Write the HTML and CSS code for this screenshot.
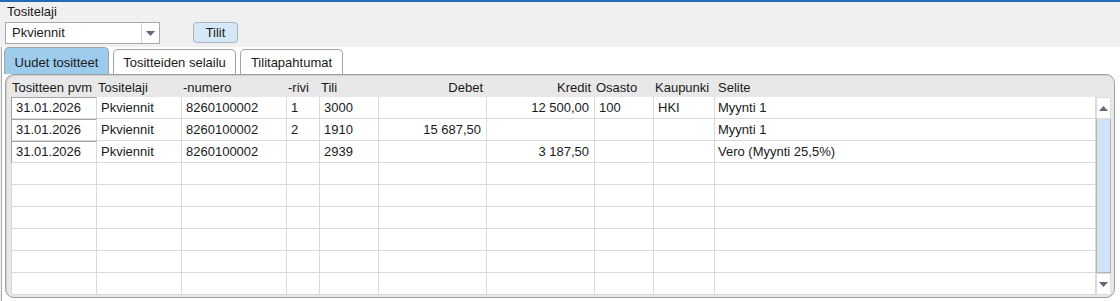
FILE: index.html
```html
<!DOCTYPE html>
<html lang="fi">
<head>
    <meta charset="UTF-8">
    <title>Tositteet</title>
    <link rel="stylesheet" href="styles.css">
</head>
<body>
    <div class="topbar"></div>

    <div class="filters">
        <div class="field-label">Tositelaji</div>
        <div class="filter-row">
            <div class="select">
                <span class="select-value">Pkviennit</span>
                <span class="select-arrow">
                    <svg width="9" height="5" viewBox="0 0 9 5"><path d="M0 0H9L4.5 5Z"/></svg>
                </span>
            </div>
            <button class="btn">Tilit</button>
        </div>
    </div>

    <div class="tab-area">
        <div class="tabs">
            <div class="tab active">Uudet tositteet</div>
            <div class="tab browse">Tositteiden selailu</div>
            <div class="tab events">Tilitapahtumat</div>
        </div>

        <div class="panel">
            <!-- otsikkorivi -->
            <div class="row head">
                <span>Tositteen pvm</span>
                <span>Tositelaji</span>
                <span>-numero</span>
                <span>-rivi</span>
                <span>Tili</span>
                <span class="num">Debet</span>
                <span class="num">Kredit</span>
                <span>Osasto</span>
                <span>Kaupunki</span>
                <span>Selite</span>
            </div>

            <div class="grid-body">
                <div class="rows">
                    <div class="row data">
                        <span class="date">31.01.2026</span>
                        <span>Pkviennit</span>
                        <span>8260100002</span>
                        <span>1</span>
                        <span>3000</span>
                        <span class="num"></span>
                        <span class="num">12 500,00</span>
                        <span>100</span>
                        <span>HKI</span>
                        <span>Myynti 1</span>
                    </div>
                    <div class="row data">
                        <span class="date">31.01.2026</span>
                        <span>Pkviennit</span>
                        <span>8260100002</span>
                        <span>2</span>
                        <span>1910</span>
                        <span class="num">15 687,50</span>
                        <span class="num"></span>
                        <span></span>
                        <span></span>
                        <span>Myynti 1</span>
                    </div>
                    <div class="row data">
                        <span class="date">31.01.2026</span>
                        <span>Pkviennit</span>
                        <span>8260100002</span>
                        <span></span>
                        <span>2939</span>
                        <span class="num"></span>
                        <span class="num">3 187,50</span>
                        <span></span>
                        <span></span>
                        <span>Vero (Myynti 25,5%)</span>
                    </div>
                    <div class="row data empty"><span></span><span></span><span></span><span></span><span></span><span></span><span></span><span></span><span></span><span></span></div>
                    <div class="row data empty"><span></span><span></span><span></span><span></span><span></span><span></span><span></span><span></span><span></span><span></span></div>
                    <div class="row data empty"><span></span><span></span><span></span><span></span><span></span><span></span><span></span><span></span><span></span><span></span></div>
                    <div class="row data empty"><span></span><span></span><span></span><span></span><span></span><span></span><span></span><span></span><span></span><span></span></div>
                    <div class="row data empty"><span></span><span></span><span></span><span></span><span></span><span></span><span></span><span></span><span></span><span></span></div>
                    <div class="row data empty"><span></span><span></span><span></span><span></span><span></span><span></span><span></span><span></span><span></span><span></span></div>
                </div>

                <div class="scrollbar">
                    <span class="sb-btn">
                        <svg width="9" height="5" viewBox="0 0 9 5"><path d="M0 5H9L4.5 0Z"/></svg>
                    </span>
                    <span class="sb-track"></span>
                    <span class="sb-btn">
                        <svg width="9" height="5" viewBox="0 0 9 5"><path d="M0 0H9L4.5 5Z"/></svg>
                    </span>
                </div>
            </div>
        </div>
    </div>
</body>
</html>
```

FILE: styles.css
```css
* { box-sizing: border-box; }

body {
    margin: 0;
    background: #f0f0f0;
    font-family: "Liberation Sans", Arial, sans-serif;
    font-size: 13px;
    color: #1a1a1a;
    overflow: hidden;
}

.topbar {
    height: 2px;
    background: #1f6cb2;
}

/* Suodattimet */
.filters {
    padding: 2px 5px 3px;
}

.field-label {
    line-height: 16px;
    padding-left: 2px;
}

.filter-row {
    display: flex;
    align-items: flex-start;
    margin-top: 2px;
}

.select {
    display: flex;
    width: 155px;
    height: 22px;
    background: #fff;
    border: 1px solid #a9a9a9;
}

.select-value {
    flex: 1;
    padding-left: 6px;
    line-height: 20px;
}

.select-arrow {
    width: 18px;
    display: flex;
    align-items: center;
    justify-content: center;
    border-left: 1px solid #d4d4d4;
}

.select-arrow svg, .sb-btn svg { fill: #5d6a7e; }

.btn {
    margin-left: 33px;
    width: 45px;
    height: 21px;
    padding: 0;
    font: inherit;
    color: inherit;
    background: #d5e8f8;
    border: 1px solid #a9b3bd;
    border-radius: 4px;
}

/* Välilehdet */
.tab-area {
    margin-left: 1px;
    border-left: 1px solid #a9a9a9;
    background: #fff;
    padding-left: 2px;
    height: 254px;
}

.tabs {
    display: flex;
    align-items: flex-end;
    gap: 4px;
    height: 27px;
}

.tab {
    height: 25px;
    padding-top: 5px;
    text-align: center;
    background: #fff;
    border: 1px solid #a3a3a3;
    border-bottom: none;
    border-radius: 5px 5px 0 0;
}

.tab.active {
    width: 105px;
    height: 27px;
    padding-top: 7px;
    background: #9ccbec;
}

.tab.browse { width: 123px; }
.tab.events { width: 103px; }

.panel {
    margin: 0 5px 0 1px;
    height: 224px;
    background: #e8e8e8;
    border: 1px solid #9f9f9f;
    border-radius: 9px;
    padding: 0 3px 0 5px;
    box-shadow: inset 1px 1px 0 #cfcfcf;
}

/* Taulukko */
.row {
    display: grid;
    grid-template-columns: 86px 85px 105px 33px 59px 108px 108px 59px 61px 1fr;
}

.row > span {
    white-space: nowrap;
    overflow: hidden;
}

.row .num { text-align: right; }

.head {
    width: 1086px;
    height: 22px;
    padding-top: 5px;
    line-height: 16px;
}

.head > span { padding: 0 4px 0 1px; }
.head > span:last-child { padding-left: 3px; }

.grid-body {
    display: flex;
}

.rows {
    width: 1086px;
    background: #fff;
}

.data > span {
    height: 22px;
    line-height: 21px;
    padding: 0 5px 0 4px;
    border-right: 1px solid #d9d9d9;
    border-bottom: 1px solid #d9d9d9;
}

.data > span:first-child {
    border-left: 1px solid #d9d9d9;
}

.data > span.date {
    border-left-color: #a3a3a3;
    border-top: 1px solid #a3a3a3;
    line-height: 20px;
}

.data > span:last-child { padding-left: 3px; }

/* Vierityspalkki */
.scrollbar {
    width: 15px;
    display: flex;
    flex-direction: column;
}

.sb-btn {
    height: 22px;
    display: flex;
    align-items: center;
    justify-content: center;
    background: #fff;
    border: 1px solid #dcdcdc;
}

.sb-track {
    flex: 1;
    background: #cfe4f7;
    border: 1px solid #b4b4b4;
    border-top: none;
}
```
